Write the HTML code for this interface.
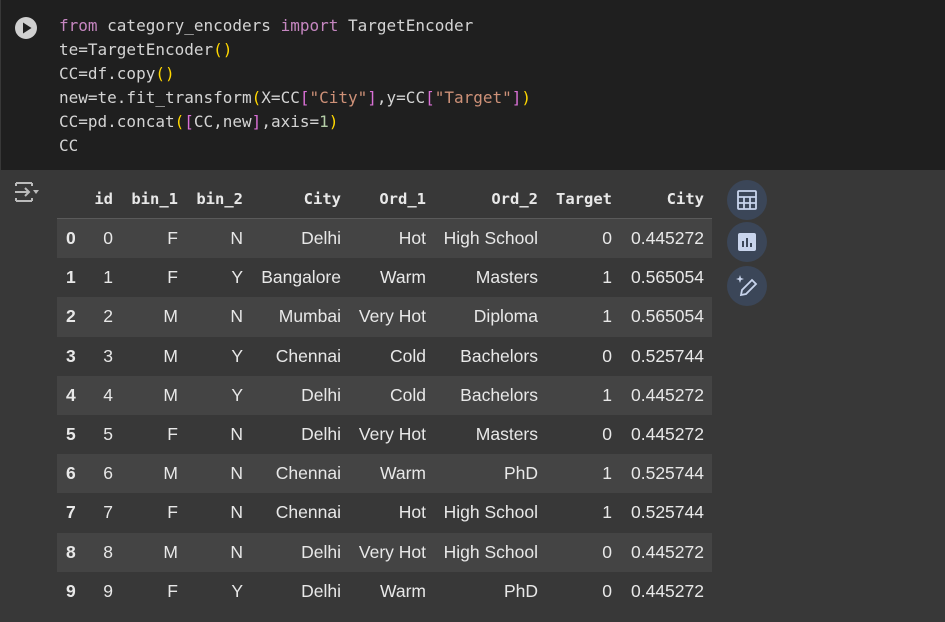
<!DOCTYPE html><html><head><style>
body{margin:0;width:945px;height:622px;background:#383838;overflow:hidden;position:relative;font-family:"Liberation Sans",sans-serif}
.code{position:absolute;left:1px;top:0;width:944px;height:170px;background:#1f1f1f}
pre{position:absolute;left:59px;top:14px;margin:0;font:16px/24px "DejaVu Sans Mono","Liberation Mono",monospace;color:#d4d4d4}
.k{color:#c586c0}.p{color:#ffd700}.b{color:#da70d6}.s{color:#ce9178}.n{color:#b5cea8}
table{position:absolute;left:57px;top:180px;border-collapse:collapse;table-layout:fixed;color:#e8e8e8}
th{font:bold 15.5px "DejaVu Sans Mono",monospace;height:38px;text-align:right;padding:0 8px 0 0;border-bottom:1px solid #5a5a5a}
td{font-size:17.5px;height:39.2px;text-align:right;padding:0 8px 0 0}
td.i{text-align:left;padding-left:9px;font-weight:bold}
tr:nth-child(odd) td{background:#444}
.btn{position:absolute;left:727px;width:40px;height:40px;border-radius:50%;background:#3b4658}
</style></head><body>
<div class="code"></div>
<svg style="position:absolute;left:14px;top:16px" width="24" height="24"><circle cx="12" cy="12" r="11" fill="#d0d0d0"/><path d="M9 6.5L17.5 12L9 17.5Z" fill="#1f1f1f"/></svg>
<pre><span class="k">from</span> category_encoders <span class="k">import</span> TargetEncoder
te=TargetEncoder<span class="p">()</span>
CC=df.copy<span class="p">()</span>
new=te.fit_transform<span class="p">(</span>X=CC<span class="b">[</span><span class="s">"City"</span><span class="b">]</span>,y=CC<span class="b">[</span><span class="s">"Target"</span><span class="b">]</span><span class="p">)</span>
CC=pd.concat<span class="p">(</span><span class="b">[</span>CC,new<span class="b">]</span>,axis=<span class="n">1</span><span class="p">)</span>
CC</pre>
<svg style="position:absolute;left:14px;top:180px" width="26" height="24" fill="none" stroke="#bbb" stroke-width="2"><path d="M2 3h16M2 21h16M2 3v3M18 3v3M2 21v-3M18 21v-3M1 12h14M11 8l4 4-4 4"/><path d="M19 10h6l-3 4z" fill="#bbb" stroke="none"/></svg>
<table>
<colgroup><col style="width:33px"><col style="width:31px"><col style="width:65px"><col style="width:65px"><col style="width:98px"><col style="width:85px"><col style="width:112px"><col style="width:74px"><col style="width:92px"></colgroup>
<thead><tr><th></th><th>id</th><th>bin_1</th><th>bin_2</th><th>City</th><th>Ord_1</th><th>Ord_2</th><th>Target</th><th>City</th></tr></thead>
<tbody>
<tr><td class="i">0</td><td>0</td><td>F</td><td>N</td><td>Delhi</td><td>Hot</td><td>High School</td><td>0</td><td>0.445272</td></tr>
<tr><td class="i">1</td><td>1</td><td>F</td><td>Y</td><td>Bangalore</td><td>Warm</td><td>Masters</td><td>1</td><td>0.565054</td></tr>
<tr><td class="i">2</td><td>2</td><td>M</td><td>N</td><td>Mumbai</td><td>Very Hot</td><td>Diploma</td><td>1</td><td>0.565054</td></tr>
<tr><td class="i">3</td><td>3</td><td>M</td><td>Y</td><td>Chennai</td><td>Cold</td><td>Bachelors</td><td>0</td><td>0.525744</td></tr>
<tr><td class="i">4</td><td>4</td><td>M</td><td>Y</td><td>Delhi</td><td>Cold</td><td>Bachelors</td><td>1</td><td>0.445272</td></tr>
<tr><td class="i">5</td><td>5</td><td>F</td><td>N</td><td>Delhi</td><td>Very Hot</td><td>Masters</td><td>0</td><td>0.445272</td></tr>
<tr><td class="i">6</td><td>6</td><td>M</td><td>N</td><td>Chennai</td><td>Warm</td><td>PhD</td><td>1</td><td>0.525744</td></tr>
<tr><td class="i">7</td><td>7</td><td>F</td><td>N</td><td>Chennai</td><td>Hot</td><td>High School</td><td>1</td><td>0.525744</td></tr>
<tr><td class="i">8</td><td>8</td><td>M</td><td>N</td><td>Delhi</td><td>Very Hot</td><td>High School</td><td>0</td><td>0.445272</td></tr>
<tr><td class="i">9</td><td>9</td><td>F</td><td>Y</td><td>Delhi</td><td>Warm</td><td>PhD</td><td>0</td><td>0.445272</td></tr>
</tbody></table>
<div class="btn" style="top:180px"><svg width="40" height="40" fill="none" stroke="#c8d4ec" stroke-width="1.8"><rect x="11" y="11" width="18" height="18" rx="1"/><path d="M11 17h18M11 23h18M17 17v12M23 17v12"/></svg></div>
<div class="btn" style="top:222px"><svg width="40" height="40"><rect x="11" y="11" width="18" height="18" rx="2" fill="#c8d4ec"/><path d="M16 19v6M20 16v9M24 21v4" stroke="#3b4658" stroke-width="2"/></svg></div>
<div class="btn" style="top:266px"><svg width="40" height="40" fill="none" stroke="#c8d4ec" stroke-width="1.8"><path d="M14 29l1-5 10-10 4 4-10 10z"/><path d="M13 9l1 3 3 1-3 1-1 3-1-3-3-1 3-1z" fill="#c8d4ec" stroke="none"/></svg></div>
</body></html>
